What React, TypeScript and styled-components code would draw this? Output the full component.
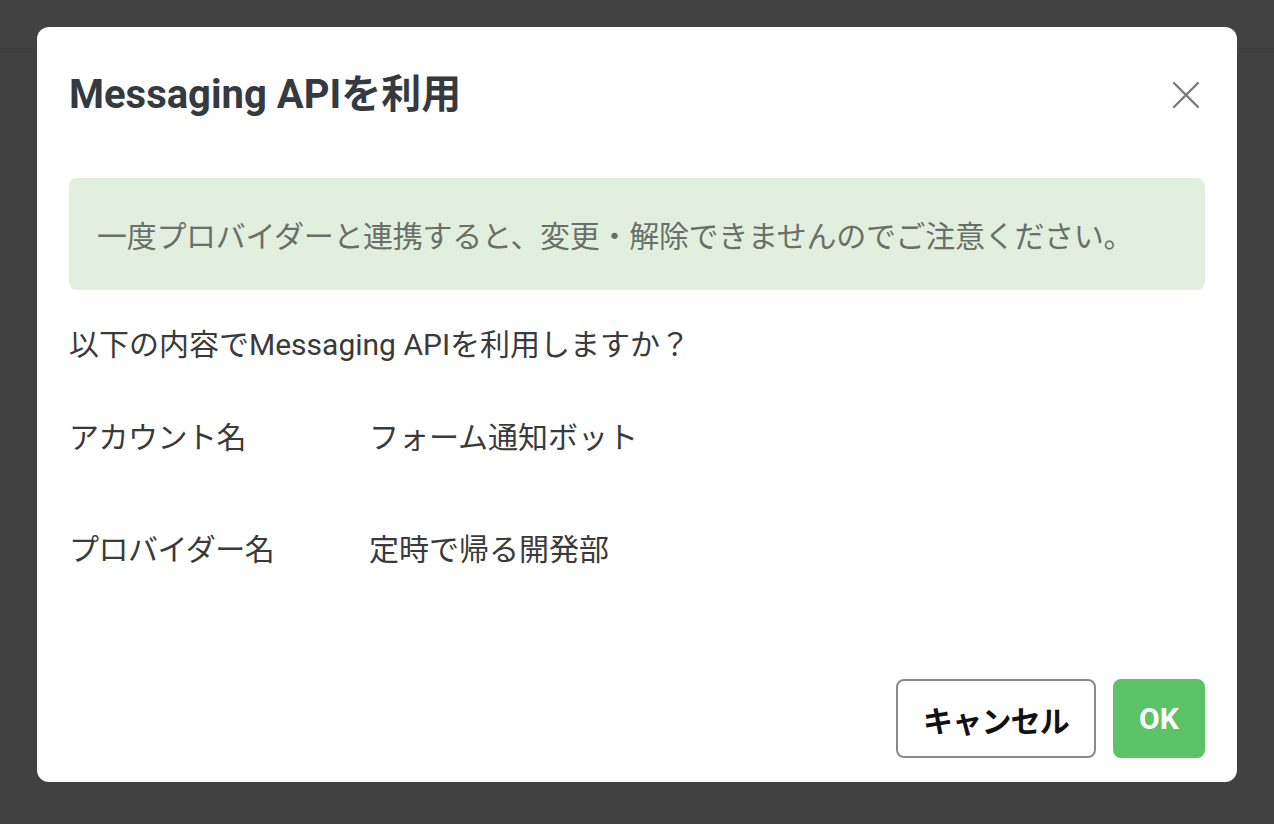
import styled, { createGlobalStyle } from "styled-components";

const GlobalStyle = createGlobalStyle`
  html, body {
    margin: 0;
    padding: 0;
    height: 100%;
    background: #ffffff;
    font-family: Roboto, "Noto Sans CJK JP", sans-serif;
  }
  #root {
    height: 100%;
  }
`;

const Page = styled.div`
  height: 824px;
  background: #f7f7f7;
`;

const TopBar = styled.div`
  height: 48px;
  background: #ffffff;
  border-bottom: 1px solid #e2e2e2;
`;

const Overlay = styled.div`
  position: fixed;
  inset: 0;
  background: rgba(0, 0, 0, 0.74);
  display: flex;
  justify-content: center;
  padding-top: 27px;
`;

const Modal = styled.div`
  width: 1200px;
  height: 755px;
  box-sizing: border-box;
  background: #ffffff;
  border-radius: 12px;
  padding: 44px 32px 24px;
  display: flex;
  flex-direction: column;
`;

const Header = styled.div`
  display: flex;
  align-items: center;
  justify-content: space-between;
  height: 48px;
`;

const Title = styled.h2`
  margin: 0;
  font-size: 40px;
  line-height: 48px;
  font-weight: 700;
  color: #343a40;
`;

const CloseButton = styled.button`
  width: 34px;
  height: 34px;
  margin-right: 2px;
  padding: 0;
  border: none;
  background: transparent;
  display: flex;
  align-items: center;
  justify-content: center;
  cursor: pointer;
`;

const Notice = styled.div`
  margin-top: 59px;
  height: 112px;
  box-sizing: border-box;
  padding: 0 28px;
  display: flex;
  align-items: center;
  background: #e2efdf;
  border-radius: 8px;
  font-size: 30px;
  letter-spacing: -0.3px;
  color: #6a6f6a;
`;

const Question = styled.p`
  margin: 32px 0 0;
  font-size: 30px;
  line-height: 45px;
  color: #3a3a3a;
`;

const InfoList = styled.dl`
  margin: 48px 0 0;
  display: flex;
  flex-direction: column;
  gap: 67px;
`;

const InfoRow = styled.div`
  display: flex;
  font-size: 30px;
  line-height: 45px;
  color: #3a3a3a;
`;

const InfoLabel = styled.dt`
  width: 300px;
  margin: 0;
  letter-spacing: -0.5px;
`;

const InfoValue = styled.dd`
  margin: 0;
`;

const Footer = styled.div`
  margin-top: auto;
  display: flex;
  justify-content: flex-end;
  gap: 17px;
`;

const Button = styled.button<{ $primary?: boolean }>`
  height: 79px;
  width: ${(p) => (p.$primary ? "92px" : "200px")};
  box-sizing: border-box;
  padding: 0;
  border-radius: 8px;
  border: 2px solid ${(p) => (p.$primary ? "#5cc468" : "#8a8a8a")};
  background: ${(p) => (p.$primary ? "#5cc468" : "#ffffff")};
  color: ${(p) => (p.$primary ? "#ffffff" : "#111111")};
  font-family: Roboto, "Noto Sans CJK JP", sans-serif;
  font-size: 30px;
  font-weight: 700;
  letter-spacing: ${(p) => (p.$primary ? "0" : "-0.8px")};
  cursor: pointer;
`;

function CloseIcon() {
  return (
    <svg width="28" height="28" viewBox="0 0 28 28">
      <path d="M2 2 L26 26 M26 2 L2 26" stroke="#7a7a7a" strokeWidth="2.4" strokeLinecap="round" />
    </svg>
  );
}

const rows = [
  { label: "アカウント名", value: "フォーム通知ボット" },
  { label: "プロバイダー名", value: "定時で帰る開発部" },
];

function App() {
  return (
    <>
      <GlobalStyle />
      <Page>
        <TopBar />
        <Overlay>
          <Modal>
            <Header>
              <Title>Messaging APIを利用</Title>
              <CloseButton aria-label="閉じる">
                <CloseIcon />
              </CloseButton>
            </Header>
            <Notice>一度プロバイダーと連携すると、変更・解除できませんのでご注意ください。</Notice>
            <Question>以下の内容でMessaging APIを利用しますか？</Question>
            <InfoList>
              {rows.map((r) => (
                <InfoRow key={r.label}>
                  <InfoLabel>{r.label}</InfoLabel>
                  <InfoValue>{r.value}</InfoValue>
                </InfoRow>
              ))}
            </InfoList>
            <Footer>
              <Button>キャンセル</Button>
              <Button $primary>OK</Button>
            </Footer>
          </Modal>
        </Overlay>
      </Page>
    </>
  );
}

export default App;
